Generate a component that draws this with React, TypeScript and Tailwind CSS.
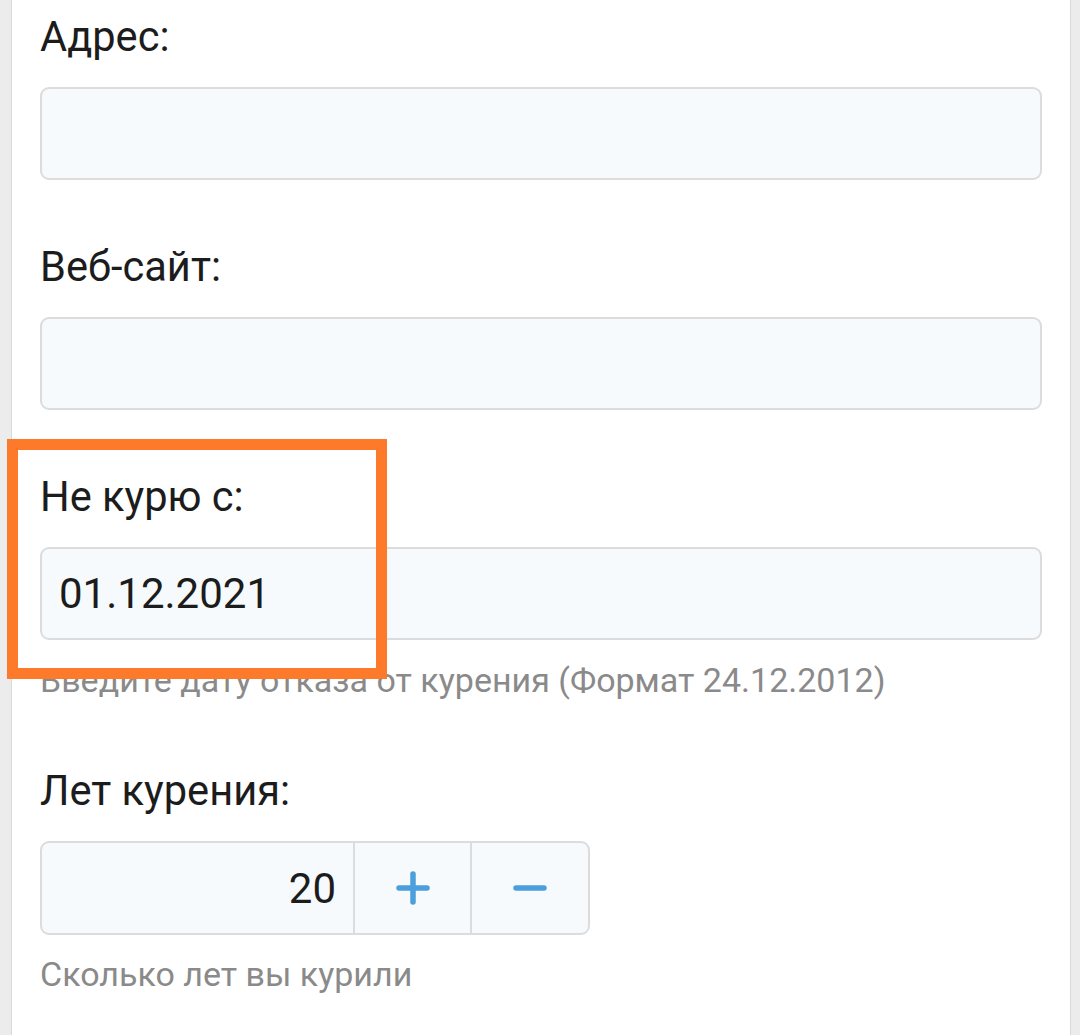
import React from "react";

const font = { fontFamily: "Roboto, 'Noto Sans', Arial, sans-serif" };

function Label({ children }: { children: React.ReactNode }) {
  return (
    <div className="text-[41.6px] leading-[48px] text-[#1c1c1c] mb-[26px]">{children}</div>
  );
}

function TextInput({ value }: { value?: string }) {
  return (
    <div className="h-[93px] rounded-[9px] border-2 border-[#dcdcdc] bg-[#f6fafd] flex items-center pl-[17px] text-[42px] text-[#1c1c1c]">
      {value}
    </div>
  );
}

export default function App() {
  return (
    <div className="w-[1080px] h-[1035px] bg-[#ececec] overflow-hidden" style={font}>
      <div className="relative ml-[11px] w-[1060px] h-[1035px] bg-white border-x border-[#d9d9d9] px-[28px] pt-[13px]">
        <Label>Адрес:</Label>
        <TextInput />

        <div className="mt-[63px]">
          <Label>Веб-сайт:</Label>
          <TextInput />
        </div>

        <div className="mt-[63px]">
          <Label>Не курю с:</Label>
          <TextInput value="01.12.2021" />
          <div className="mt-[20px] text-[34px] leading-[40px] text-[#8a8a8a]">
            Введите дату отказа от курения (Формат 24.12.2012)
          </div>
        </div>

        <div className="mt-[67px]">
          <Label>Лет курения:</Label>
          <div className="w-[550px] h-[94px] rounded-[9px] border-2 border-[#dcdcdc] bg-[#f6fafd] flex overflow-hidden">
            <div className="w-[313px] flex items-center justify-end pr-[17px] text-[42px] text-[#1c1c1c] border-r-2 border-[#dcdcdc]">
              20
            </div>
            <div className="w-[117px] flex items-center justify-center border-r-2 border-[#dcdcdc]">
              <svg width="34" height="34" viewBox="0 0 34 34">
                <path d="M17 3v28M3 17h28" stroke="#4a9fdc" strokeWidth="5.5" strokeLinecap="round" />
              </svg>
            </div>
            <div className="flex-1 flex items-center justify-center">
              <svg width="34" height="34" viewBox="0 0 34 34">
                <path d="M3 17h28" stroke="#4a9fdc" strokeWidth="5.5" strokeLinecap="round" />
              </svg>
            </div>
          </div>
          <div className="mt-[19px] text-[34px] leading-[40px] text-[#8a8a8a]">Сколько лет вы курили</div>
        </div>

        <div className="absolute left-[-5px] top-[439px] w-[380px] h-[240px] border-[11px] border-[#fe7a2b]" />
      </div>
    </div>
  );
}
